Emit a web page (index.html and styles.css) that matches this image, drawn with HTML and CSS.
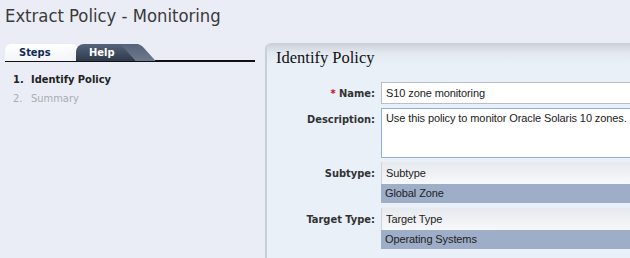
FILE: index.html
```html
<!DOCTYPE html>
<html lang="en">
<head>
  <meta charset="UTF-8" />
  <title>Extract Policy - Monitoring</title>
  <link rel="stylesheet" href="styles.css">
</head>
<body>
  <div class="page-title">Extract Policy - Monitoring</div>
  <div class="main">
    <div class="sidebar">
      <div class="tabs">
        <div class="tab tab-active">Steps</div>
        <div class="tab tab-dark">Help</div>
      </div>
      <ol class="steps">
        <li class="step current"><span class="num">1.</span>Identify Policy</li>
        <li class="step"><span class="num">2.</span>Summary</li>
      </ol>
    </div>
    <div class="panel">
      <div class="panel-header">Identify Policy</div>
      <div class="form">
        <div class="row">
          <label class="label"><span class="req">*</span> Name:</label>
          <div class="field input">S10 zone monitoring</div>
        </div>
        <div class="row">
          <label class="label">Description:</label>
          <div class="field textarea">Use this policy to monitor Oracle Solaris 10 zones.</div>
        </div>
        <div class="row">
          <label class="label">Subtype:</label>
          <div class="field list">
            <div class="list-head">Subtype</div>
            <div class="list-item">Global Zone</div>
          </div>
        </div>
        <div class="row">
          <label class="label">Target Type:</label>
          <div class="field list">
            <div class="list-head">Target Type</div>
            <div class="list-item">Operating Systems</div>
          </div>
        </div>
      </div>
    </div>
  </div>
</body>
</html>
```

FILE: styles.css
```css
/* RESET */
* { box-sizing: border-box; margin: 0; padding: 0; }
html, body { width: 100%; height: 100%; overflow: hidden; }

body {
  background: #eaedf5;
  font-family: Tahoma, "DejaVu Sans Condensed", "DejaVu Sans", sans-serif;
  font-size: 11px;
  color: #222;
}

/* PAGE TITLE */
.page-title {
  height: 43px;
  padding: 5px 0 0 5px;
  font-size: 18.3px;
  color: #3a3a3a;
}

.main {
  display: flex;
  height: 215px;
}

/* LEFT SIDE: TABS + STEPS */
.sidebar {
  width: 265px;
  flex: none;
  padding-left: 5px;
}

.tabs {
  display: flex;
  width: 250px;
  height: 19px;
  border-bottom: 2px solid #111;
  padding-top: 1px;
}
.tab {
  position: relative;
  height: 17px;
  line-height: 17px;
  font-weight: bold;
  font-size: 11px;
}
.tab-active {
  width: 70px;
  padding-left: 14px;
  color: #102a56;
  background: linear-gradient(to bottom, #ffffff, #f3f5f8);
  border-top-left-radius: 6px;
}
.tab-active::after {
  content: "";
  position: absolute;
  top: 0;
  right: -8px;
  width: 16px;
  height: 17px;
  background: linear-gradient(to bottom, #ffffff, #eef1f5);
  transform: skewX(40deg);
  border-top-right-radius: 4px;
}
.tab-dark {
  width: 62px;
  margin-left: 1px;
  padding-left: 13px;
  color: #fff;
  background: linear-gradient(to bottom, #55637a, #2f3a4a);
  border-top-left-radius: 8px;
  z-index: 1;
}
.tab-dark::after {
  content: "";
  position: absolute;
  top: 0;
  right: -10px;
  width: 20px;
  height: 17px;
  background: linear-gradient(to bottom, #55637a, #6d7a8c);
  transform: skewX(42deg);
  border-top-right-radius: 4px;
}

.steps {
  list-style: none;
  padding: 8px 0 0 8px;
}
.step {
  height: 19px;
  line-height: 19px;
  color: #a9acb1;
}
.step.current {
  color: #222;
  font-weight: bold;
}
.num {
  display: inline-block;
  width: 18px;
}

/* RIGHT PANEL */
.panel {
  flex: 1;
  background: #e9f0f8;
  border-left: 2px solid #c9cfd8;
  border-top-left-radius: 6px;
  overflow: hidden;
}
.panel-header {
  height: 33px;
  padding: 5px 0 0 9px;
  font-family: "Liberation Serif", "DejaVu Serif", serif;
  font-size: 16.5px;
  color: #111;
  background: linear-gradient(to bottom, #cbd0d8 0px, #e4e9f1 10px, #e9f0f8 22px);
}

.form {
  display: flex;
  flex-direction: column;
  gap: 4px;
  padding-top: 6px;
}
.row {
  display: flex;
  gap: 6px;
}
.label {
  width: 108px;
  flex: none;
  text-align: right;
  font-weight: bold;
  color: #333;
  padding-top: 5px;
}
.req { color: #d0021b; }

.field {
  flex: 1;
  min-width: 0;
  color: #222;
  font-family: "Liberation Sans", Arial, sans-serif;
  font-size: 11px;
  letter-spacing: -0.1px;
  white-space: nowrap;
}
.input {
  height: 22px;
  line-height: 20px;
  padding-left: 4px;
  background: #fff;
  border: 1px solid #b8bec8;
  border-right: none;
}
.textarea {
  height: 50px;
  padding: 3px 0 0 4px;
  background: #fff;
  border: 1px solid #8db0dc;
  border-right: none;
}
.list-head {
  height: 22px;
  line-height: 22px;
  padding-left: 4px;
  background: linear-gradient(to bottom, #e6e9ee, #f7f8fa);
  border-left: 1px solid #d0d4da;
}
.list-item {
  height: 19px;
  line-height: 19px;
  padding-left: 4px;
  background: #9eadc8;
  color: #222;
}
.row:nth-child(4) { margin-top: 1px; }
```
